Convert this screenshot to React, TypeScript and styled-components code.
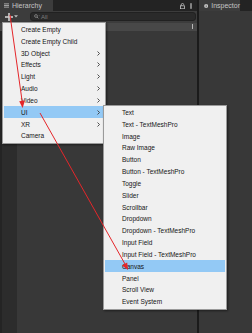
import React from "react";
import styled, { createGlobalStyle } from "styled-components";

const GlobalStyle = createGlobalStyle`
  html, body { margin: 0; padding: 0; background: #383838; }
  body { font-family: "Liberation Sans", Arial, sans-serif; }
  * { box-sizing: border-box; }
`;

const Window = styled.div`
  position: relative;
  width: 252px;
  height: 333px;
  display: flex;
  overflow: hidden;
  background: #383838;
`;

const Panel = styled.div<{ $w?: number }>`
  display: flex;
  flex-direction: column;
  width: ${(p) => (p.$w ? `${p.$w}px` : "auto")};
  flex: ${(p) => (p.$w ? "0 0 auto" : "1 1 auto")};
  background: #383838;
`;

const TabHeader = styled.div`
  height: 11px;
  flex: 0 0 11px;
  background: #232323;
  display: flex;
  align-items: stretch;
`;

const Tab = styled.div<{ $w: number; $pad: number }>`
  width: ${(p) => p.$w}px;
  background: #3c3c3c;
  display: flex;
  align-items: center;
  gap: 3px;
  padding-left: ${(p) => p.$pad}px;
  color: #c4c4c4;
  font-size: 7px;
  line-height: 1;
`;

const HeaderTools = styled.div`
  margin-left: auto;
  display: flex;
  align-items: center;
  gap: 5px;
  padding-right: 5px;
`;

const Toolbar = styled.div`
  height: 11.5px;
  flex: 0 0 11.5px;
  background: #3c3c3c;
  display: flex;
  align-items: center;
  padding: 0 1px 0 5px;
  gap: 3px;
`;

const AddButton = styled.div`
  width: 22px;
  display: flex;
  align-items: center;
  gap: 1px;
`;

const SearchField = styled.div`
  flex: 1;
  height: 9px;
  border-radius: 3px;
  background: #2a2a2a;
  border: 1px solid #212121;
  display: flex;
  align-items: center;
  gap: 1px;
  padding-left: 3px;
  color: #7d7d7d;
  font-size: 6px;
`;

const SceneRow = styled.div`
  height: 8px;
  flex: 0 0 8px;
  background: #484848;
  display: flex;
  align-items: center;
  justify-content: flex-end;
  padding-right: 4px;
`;

const RowMark = styled.div`
  width: 1.5px;
  height: 5px;
  background: #b8b8b8;
`;

const ListArea = styled.div`
  flex: 1;
  display: flex;
  background: #383838;
`;

const Gutter = styled.div`
  width: 17px;
  background: #2c2c2c;
  border-left: 2px solid #242424;
`;

const Divider = styled.div`
  width: 2px;
  flex: 0 0 2px;
  background: #1b1b1b;
`;

const Menu = styled.div<{ $top: number; $left: number; $w: number }>`
  position: absolute;
  top: ${(p) => p.$top}px;
  left: ${(p) => p.$left}px;
  width: ${(p) => p.$w}px;
  background: #f0f0f0;
  border: 1px solid #9a9a9a;
  box-shadow: 1px 1px 2px rgba(0, 0, 0, 0.45);
  padding: 0.5px 1px 1px 1px;
  display: flex;
  flex-direction: column;
`;

const Item = styled.div<{ $active?: boolean }>`
  height: 11.83px;
  display: flex;
  align-items: center;
  padding: 0 4px 0 17px;
  font-size: 6.5px;
  color: #151515;
  white-space: nowrap;
  background: ${(p) => (p.$active ? "#93c9f5" : "transparent")};
`;

const ItemLabel = styled.span`
  flex: 1;
`;

const Overlay = styled.svg`
  position: absolute;
  left: 0;
  top: 0;
  pointer-events: none;
`;

const Chevron = () => (
  <svg width="3" height="5" viewBox="0 0 3 5">
    <polyline points="0.5,0.5 2.5,2.5 0.5,4.5" fill="none" stroke="#3c3c3c" strokeWidth="0.9" />
  </svg>
);

const ListIcon = () => (
  <svg width="5" height="5" viewBox="0 0 5 5">
    <rect x="0" y="0.5" width="5" height="0.8" fill="#bdbdbd" />
    <rect x="0" y="2.1" width="5" height="0.8" fill="#bdbdbd" />
    <rect x="0" y="3.7" width="5" height="0.8" fill="#bdbdbd" />
  </svg>
);

const InfoIcon = () => (
  <svg width="6" height="6" viewBox="0 0 6 6">
    <circle cx="3" cy="3" r="2.8" fill="#c9c9c9" />
    <rect x="2.6" y="1.1" width="0.9" height="0.8" fill="#333" />
    <rect x="2.6" y="2.4" width="0.9" height="2.4" fill="#333" />
  </svg>
);

const LockIcon = () => (
  <svg width="5" height="6" viewBox="0 0 5 6">
    <path d="M1.2 2.8 V1.8 A1.3 1.3 0 0 1 3.8 1.8" fill="none" stroke="#c4c4c4" strokeWidth="0.8" />
    <rect x="0.5" y="2.8" width="4" height="3" fill="none" stroke="#c4c4c4" strokeWidth="0.8" />
  </svg>
);

const Kebab = () => (
  <svg width="2" height="6" viewBox="0 0 2 6">
    <rect x="0.4" y="0.2" width="1.2" height="5.6" fill="#c4c4c4" />
  </svg>
);

const PlusIcon = () => (
  <svg width="8" height="8" viewBox="0 0 8 8">
    <rect x="3.2" y="0" width="1.6" height="8" fill="#cfcfcf" />
    <rect x="0" y="3.2" width="8" height="1.6" fill="#cfcfcf" />
  </svg>
);

const Caret = () => (
  <svg width="4" height="3" viewBox="0 0 4 3">
    <polygon points="0,0.3 4,0.3 2,2.6" fill="#bdbdbd" />
  </svg>
);

const SearchIcon = () => (
  <svg width="6" height="5" viewBox="0 0 6 5">
    <circle cx="2" cy="2" r="1.4" fill="none" stroke="#8a8a8a" strokeWidth="0.8" />
    <line x1="3" y1="3" x2="4.4" y2="4.4" stroke="#8a8a8a" strokeWidth="0.9" />
    <polygon points="4.6,1.4 5.8,1.4 5.2,2.2" fill="#8a8a8a" />
  </svg>
);

const mainItems: { label: string; sub?: boolean; active?: boolean }[] = [
  { label: "Create Empty" },
  { label: "Create Empty Child" },
  { label: "3D Object", sub: true },
  { label: "Effects", sub: true },
  { label: "Light", sub: true },
  { label: "Audio", sub: true },
  { label: "Video", sub: true },
  { label: "UI", sub: true, active: true },
  { label: "XR", sub: true },
  { label: "Camera" },
];

const uiItems = [
  "Text",
  "Text - TextMeshPro",
  "Image",
  "Raw Image",
  "Button",
  "Button - TextMeshPro",
  "Toggle",
  "Slider",
  "Scrollbar",
  "Dropdown",
  "Dropdown - TextMeshPro",
  "Input Field",
  "Input Field - TextMeshPro",
  "Canvas",
  "Panel",
  "Scroll View",
  "Event System",
];

export default function App() {
  return (
    <>
      <GlobalStyle />
      <Window>
        <Panel $w={197}>
          <TabHeader>
            <Tab $w={53} $pad={4}>
              <ListIcon />
              <span>Hierarchy</span>
            </Tab>
            <HeaderTools>
              <LockIcon />
              <Kebab />
            </HeaderTools>
          </TabHeader>
          <Toolbar>
            <AddButton>
              <PlusIcon />
              <Caret />
            </AddButton>
            <SearchField>
              <SearchIcon />
              <span>All</span>
            </SearchField>
          </Toolbar>
          <SceneRow>
            <RowMark />
          </SceneRow>
          <ListArea>
            <Gutter />
          </ListArea>
        </Panel>
        <Divider />
        <Panel>
          <TabHeader>
            <Tab $w={41} $pad={5}>
              <InfoIcon />
              <span>Inspector</span>
            </Tab>
          </TabHeader>
        </Panel>

        <Menu $top={22} $left={2} $w={104}>
          {mainItems.map((it) => (
            <Item key={it.label} $active={it.active}>
              <ItemLabel>{it.label}</ItemLabel>
              {it.sub && <Chevron />}
            </Item>
          ))}
        </Menu>

        <Menu $top={105} $left={103} $w={124}>
          {uiItems.map((label) => (
            <Item key={label} $active={label === "Canvas"}>
              <ItemLabel>{label}</ItemLabel>
            </Item>
          ))}
        </Menu>

        <Overlay width="252" height="333" viewBox="0 0 252 333">
          <line x1="10" y1="15" x2="22.1" y2="101" stroke="#e5262a" strokeWidth="1" />
          <polygon points="25,100.5 19.2,101.3 22.6,108" fill="#e5262a" />
          <line x1="40" y1="113" x2="125" y2="264" stroke="#e5262a" strokeWidth="1" />
          <polygon points="127.2,262.4 122,265.4 128,270" fill="#e5262a" />
        </Overlay>
      </Window>
    </>
  );
}
